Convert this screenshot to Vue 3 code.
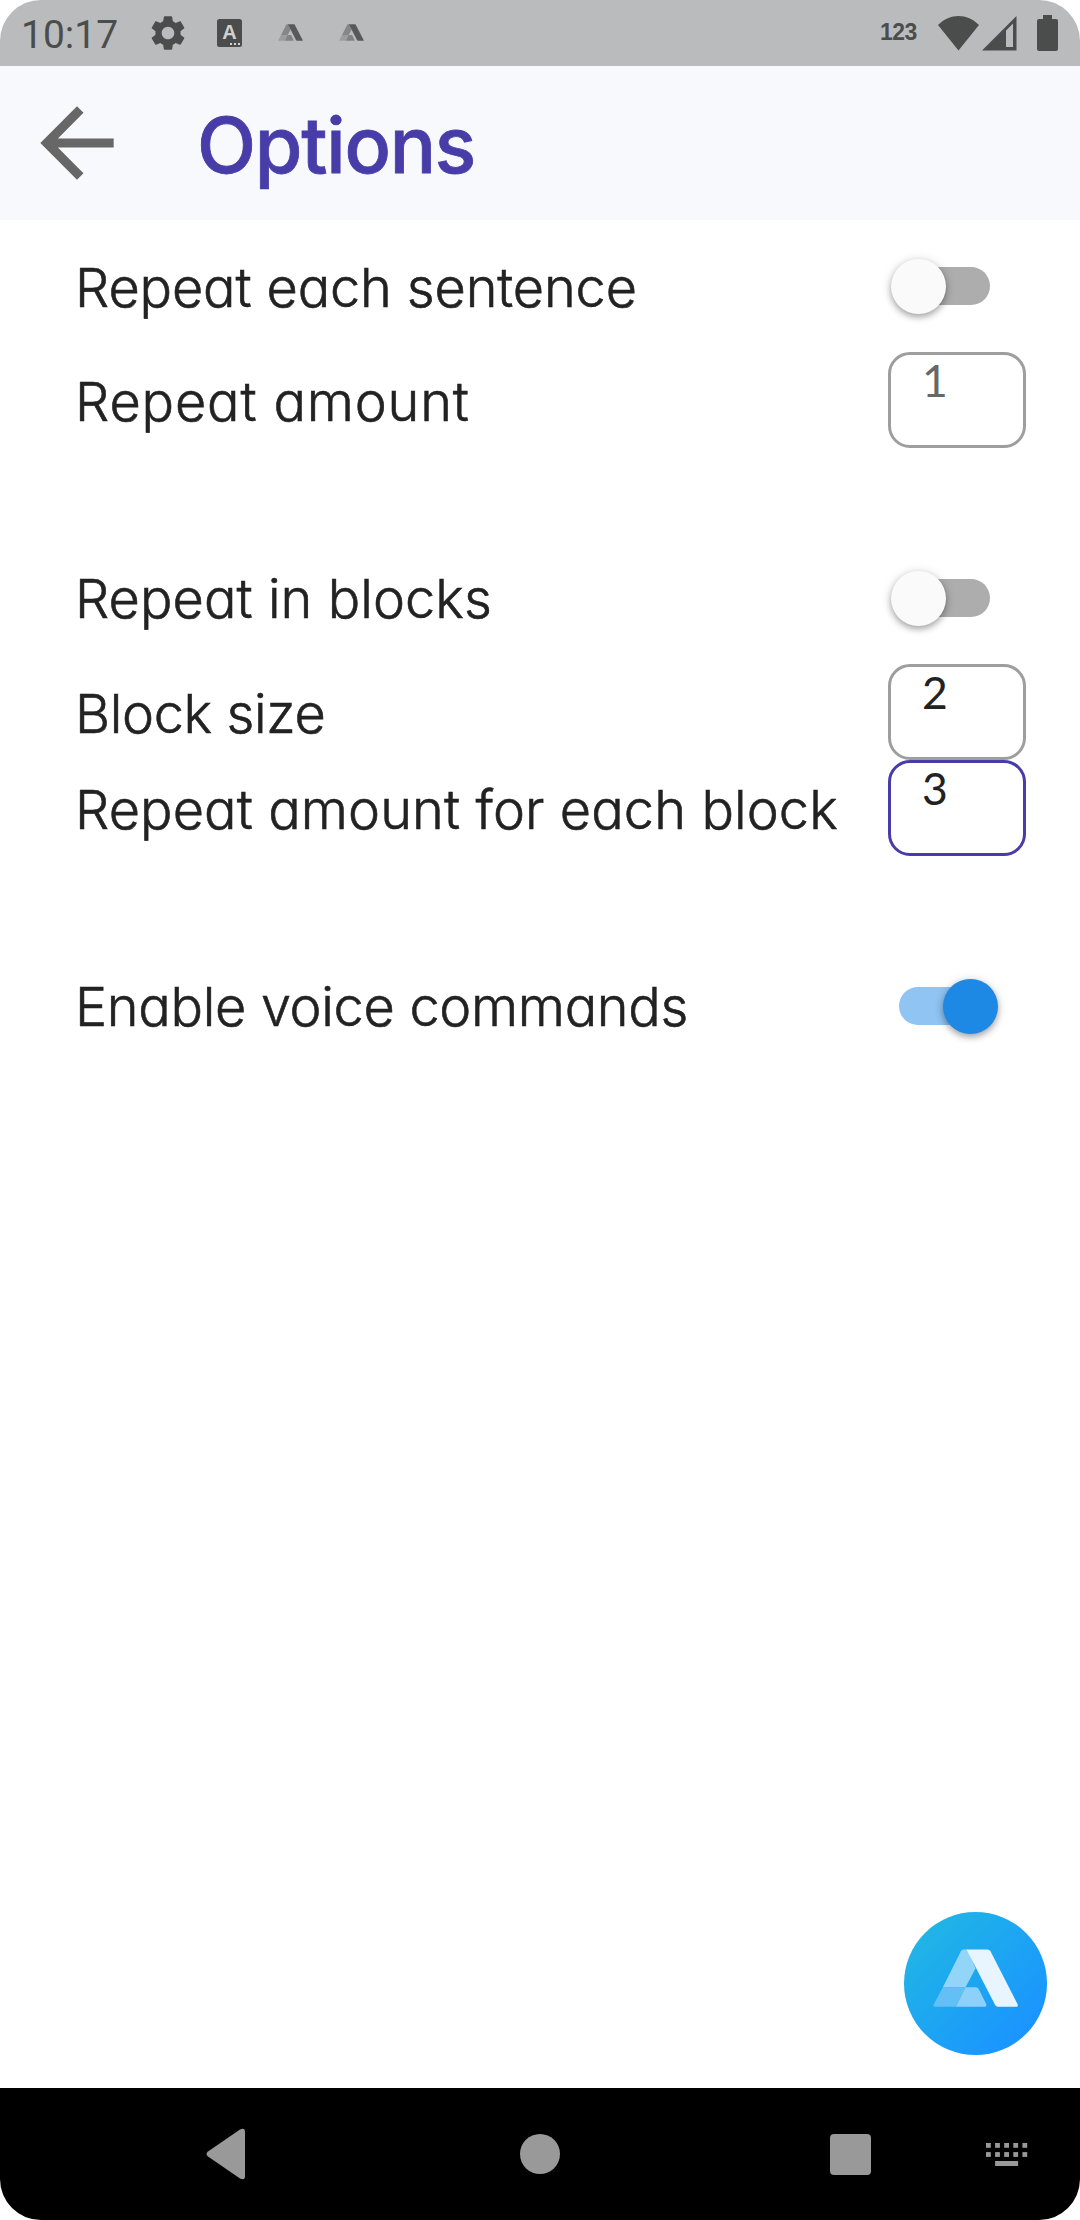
<script setup>
import { ref } from 'vue'

const groups = ref([
  [
    { label: 'Repeat each sentence', spacing: -0.14, type: 'switch', on: false },
    { label: 'Repeat amount', spacing: 0.85, type: 'number', value: '1', state: 'muted' },
  ],
  [
    { label: 'Repeat in blocks', spacing: 0.07, type: 'switch', on: false },
    { label: 'Block size', spacing: -0.35, type: 'number', value: '2', state: '' },
    { label: 'Repeat amount for each block', spacing: 0.11, type: 'number', value: '3', state: 'focused' },
  ],
  [{ label: 'Enable voice commands', spacing: -0.3, type: 'switch', on: true }],
])
const keys = [0, 1, 2, 3, 4]
</script>

<template>
  <div class="screen">
    <div class="status">
      <span class="time">10:17</span>
      <svg class="gear" viewBox="0 0 24 24">
        <path d="M19.14 12.94c.04-.3.06-.61.06-.94 0-.32-.02-.64-.07-.94l2.03-1.58c.18-.14.23-.41.12-.61l-1.92-3.32c-.12-.22-.37-.29-.59-.22l-2.39.96c-.5-.38-1.03-.7-1.62-.94l-.36-2.54c-.04-.24-.24-.41-.48-.41h-3.84c-.24 0-.43.17-.47.41l-.36 2.54c-.59.24-1.13.57-1.62.94l-2.39-.96c-.22-.08-.47 0-.59.22L2.74 8.87c-.12.21-.08.47.12.61l2.03 1.58c-.05.3-.09.63-.09.94s.02.64.07.94l-2.03 1.58c-.18.14-.23.41-.12.61l1.92 3.32c.12.22.37.29.59.22l2.39-.96c.5.38 1.03.7 1.62.94l.36 2.54c.05.24.24.41.48.41h3.84c.24 0 .44-.17.47-.41l.36-2.54c.59-.24 1.13-.56 1.62-.94l2.39.96c.22.08.47 0 .59-.22l1.92-3.32c.12-.22.07-.47-.12-.61l-2.01-1.58zM12 15.6c-1.98 0-3.6-1.62-3.6-3.6s1.62-3.6 3.6-3.6 3.6 1.62 3.6 3.6-1.62 3.6-3.6 3.6z" />
      </svg>
      <span class="badge">A<i></i></span>
      <svg v-for="n in 2" :key="n" class="mini" viewBox="158 176 258 176">
        <path fill="#85878a" d="M246 178h20l22 57-31 56h-68z" />
        <path fill="#9b9d9e" d="M189 291h68l-29 59h-66q-3-3-1-7z" />
        <path fill="#808283" d="M257 291h31q6 0 9 6l23 48q0 5-4 5h-88z" />
        <path fill="#585a5a" d="M260 178h64q4 0 7 5l83 160q1 7-4 7h-58q-4 0-7-5z" />
      </svg>
      <span class="digits">123</span>
      <svg class="wifi" viewBox="0 0 41 35"><path d="M0 9C12-3 29-3 41 9L20.5 34.5z" /></svg>
      <svg class="signal" viewBox="0 0 35 35"><path fill-rule="evenodd" d="M0 34.5L34.5 0v34.5zM24 14.500v16.500h7V7.500z" /></svg>
      <svg class="battery" viewBox="0 0 21 36"><path d="M6 0h9v4h4q2 0 2 2v28q0 2-2 2H2q-2 0-2-2V6q0-2 2-2h4z" /></svg>
    </div>

    <header class="bar">
      <svg class="back" viewBox="0 0 24 24"><path d="M20 11H7.83l5.590-5.590L12 4l-8 8 8 8 1.410-1.410L7.830 13H20v-2z" /></svg>
      <h1>Options</h1>
    </header>

    <main>
      <section v-for="(group, g) in groups" :key="g">
        <div v-for="row in group" :key="row.label" class="row" :class="row.type">
          <span class="label" :style="{ letterSpacing: row.spacing + 'px' }">{{ row.label }}</span>
          <div v-if="row.type === 'switch'" class="toggle" :class="{ on: row.on }" @click="row.on = !row.on">
            <div class="thumb"></div>
          </div>
          <div v-else class="field" :class="row.state">{{ row.value }}</div>
        </div>
      </section>

      <svg class="fab" viewBox="72 65 430 430">
        <defs>
          <linearGradient id="sky" x1="0.1" y1="0.15" x2="0.85" y2="0.88">
            <stop offset="0" stop-color="#20b5e6" />
            <stop offset="1" stop-color="#1a94ff" />
          </linearGradient>
        </defs>
        <circle cx="287" cy="280" r="215" fill="url(#sky)" />
        <path fill="#93d5f8" d="M250 178h14l23 57-30 56h-68l54-108q3-5 7-5z" />
        <path fill="#62c0f6" d="M189 291h68l-29 59h-64q-5-1-3-7z" />
        <path fill="#8dd0fa" d="M257 291h31q6 0 9 6l23 46q0 7-5 7h-87z" />
        <path fill="#e8f5fe" d="M260 178h64q5 0 8 5l82 160q1 7-4 7h-56q-5 0-8-5z" />
      </svg>
    </main>

    <nav>
      <svg class="nav-back" viewBox="0 0 40 52"><path d="M2 23.500L34 1.500Q39 -1 39 4V48Q39 53 34 50.500L2 28.500Q-1 26 2 23.500z" /></svg>
      <span class="nav-home"></span>
      <span class="nav-recent"></span>
      <svg class="nav-keys" viewBox="0 0 42 23">
        <rect v-for="k in keys" :key="'a' + k" :x="k * 9.1" y="0" width="4.8" height="4.800" />
        <rect v-for="k in keys" :key="'b' + k" :x="k * 9.1" y="9.1" width="4.8" height="4.800" />
        <rect x="9.1" y="18" width="23" height="5" />
      </svg>
    </nav>
  </div>
</template>

<style>
body {
  background: #fff;
}
</style>

<style scoped>
.screen {
  width: 1080px;
  height: 2220px;
  display: flex;
  flex-direction: column;
  overflow: hidden;
  border-radius: 41px;
  background: #fff;
  font-family: Inter, "Noto Sans", sans-serif;
  font-feature-settings: "cv11";
}
svg {
  display: block;
  flex: none;
}
.status {
  height: 66px;
  flex: none;
  box-sizing: border-box;
  padding: 0 22px 0 21px;
  display: flex;
  align-items: center;
  background: #babbbd;
  color: #4b4d4c;
  fill: #4b4d4c;
}
.time {
  width: 100px;
  font: 39px/46px Roboto, sans-serif;
  margin-top: 3px;
}
.gear {
  width: 42px;
  height: 42px;
  margin-left: 26px;
}
.badge {
  width: 25px;
  height: 28px;
  margin-left: 28px;
  border-radius: 2.5px;
  background: #4b4d4c;
  color: #d0d1d2;
  font: bold 20px/27px "Liberation Sans", sans-serif;
  text-align: center;
  position: relative;
}
.badge i {
  position: absolute;
  right: 2px;
  bottom: 2px;
  width: 10px;
  height: 2px;
  background: repeating-linear-gradient(90deg, #d0d1d2 0 2px, transparent 2px 4px);
}
.mini {
  width: 25px;
  height: 17px;
  margin: -2px 0 0 36px;
}
.digits {
  width: 38px;
  margin: -2px 0 0 auto;
  font: bold 23px/26px "Liberation Sans", sans-serif;
  letter-spacing: -0.6px;
}
.wifi {
  width: 41px;
  height: 35px;
  margin-left: 20px;
}
.signal {
  width: 35px;
  height: 35px;
  margin-left: 3px;
}
.battery {
  width: 21px;
  height: 36px;
  margin-left: 20px;
}
.bar {
  height: 154px;
  flex: none;
  display: flex;
  align-items: center;
  background: #f8f9fc;
}
.back {
  width: 110px;
  height: 110px;
  margin-left: 22px;
  fill: #676767;
}
h1 {
  margin: 4px 0 0 65px;
  font-size: 77px;
  line-height: 92px;
  font-weight: 500;
  letter-spacing: -1.2px;
  -webkit-text-stroke: 0.8px currentColor;
  color: #483da8;
}
main {
  flex: 1;
  display: flex;
  flex-direction: column;
}
section {
  margin-bottom: 84px;
}
.row {
  display: flex;
  align-items: center;
  justify-content: space-between;
  height: 96px;
  padding-left: 75px;
}
.row.switch {
  height: 132px;
}
.label {
  padding-top: 3px;
  font-size: 54px;
  line-height: 66px;
  font-weight: 300;
  -webkit-text-stroke: 0.6px currentColor;
  color: #222;
  white-space: nowrap;
}
section + section .switch .label {
  padding-top: 1px;
}
.toggle {
  width: 91px;
  height: 38px;
  margin-right: 90px;
  border-radius: 19px;
  background: #adadad;
}
.thumb {
  width: 55px;
  height: 55px;
  margin: -8px 0 0 -8px;
  border-radius: 50%;
  background: #fafafa;
  box-shadow: 0 3px 6px rgba(0, 0, 0, 0.3), 0 1px 12px rgba(0, 0, 0, 0.12);
}
.toggle::before {
  content: "";
  display: table;
}
.toggle.on {
  background: #90c4f3;
}
.on .thumb {
  margin-left: 44px;
  background: #1e88e5;
}
.field {
  box-sizing: border-box;
  width: 138px;
  height: 96px;
  margin-right: 54px;
  padding: 0 0 0 31px;
  border: 3px solid #9e9e9e;
  border-radius: 22px;
  font: 44.500px/50px Lato, sans-serif;
  color: #222;
}
.field.muted {
  color: #676767;
}
.field.focused {
  border-color: #483da8;
}
.fab {
  width: 143px;
  height: 143px;
  margin: auto 33px 33px auto;
}
nav {
  height: 132px;
  flex: none;
  display: flex;
  align-items: center;
  background: #000;
  fill: #999;
}
.nav-back {
  width: 40px;
  height: 52px;
  margin-left: 206px;
}
.nav-home {
  width: 40px;
  height: 40px;
  margin-left: 274px;
  border-radius: 50%;
  background: #999;
}
.nav-recent {
  width: 41px;
  height: 41px;
  margin-left: 270px;
  border-radius: 4px;
  background: #999;
}
.nav-keys {
  width: 42px;
  height: 23px;
  margin-left: 115px;
}
</style>
